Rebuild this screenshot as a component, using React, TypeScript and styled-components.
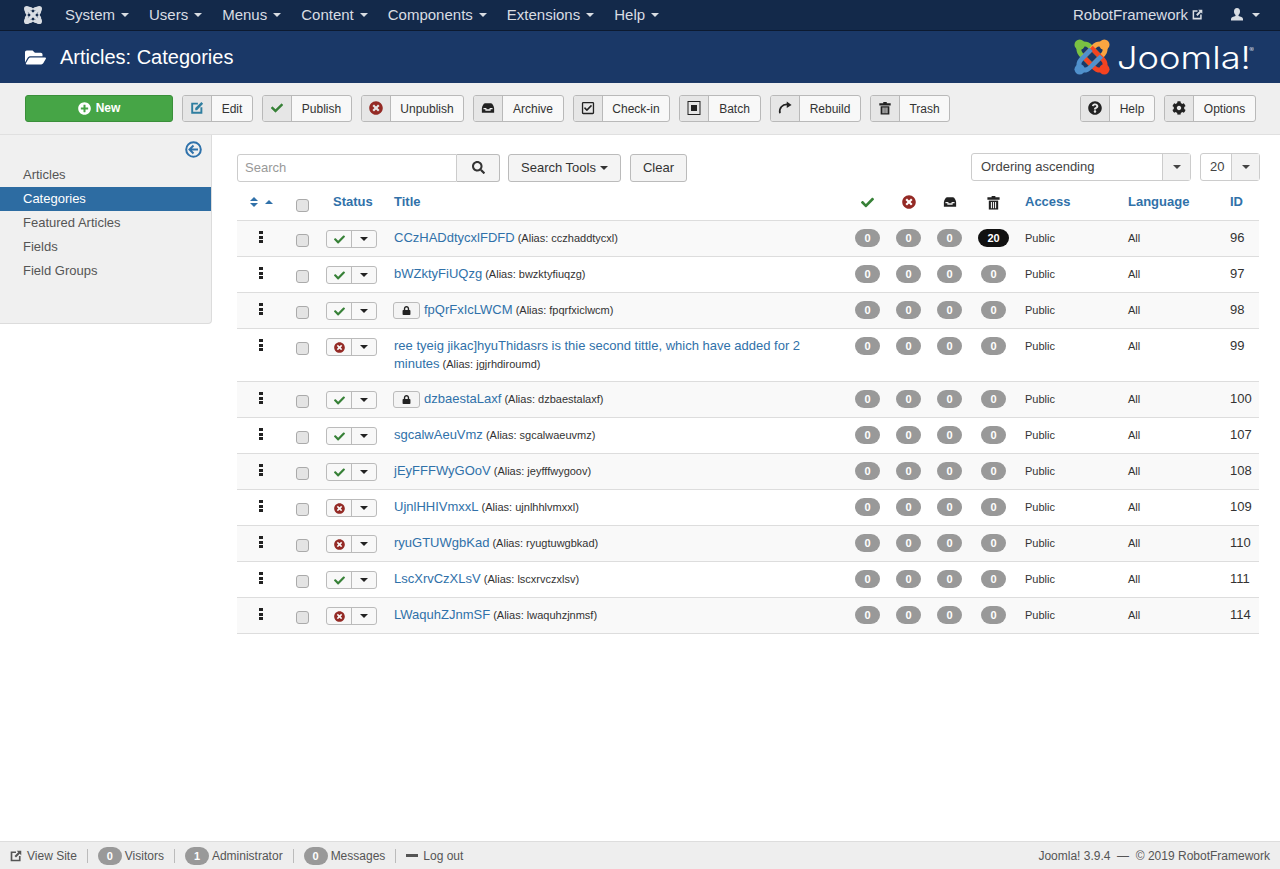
import React from "react";
import styled, { createGlobalStyle } from "styled-components";
import {
  FaCheck,
  FaCog,
  FaFolderOpen,
  FaLock,
  FaPlusCircle,
  FaQuestionCircle,
  FaRegCheckSquare,
  FaSearch,
  FaTimesCircle,
} from "react-icons/fa";

const GlobalStyle = createGlobalStyle`
  html, body { margin: 0; padding: 0; height: 100%; }
  body {
    font-family: "Liberation Sans", Arial, sans-serif;
    font-size: 13px;
    line-height: 18px;
    color: #333;
    background: #fff;
  }
  * { box-sizing: border-box; }
`;

const Page = styled.div`
  height: 869px;
  display: flex;
  flex-direction: column;
  overflow: hidden;
`;

const NavBar = styled.nav`
  height: 31px;
  flex: none;
  background: #13294a;
  border-bottom: 1px solid #0c1a30;
  display: flex;
  align-items: center;
  padding: 0 20px 1px 24px;
  color: #d9dde3;
  font-size: 15px;
`;

const NavLogo = styled.span`
  width: 18px;
  display: flex;
  margin-right: 23px;
`;

const NavItem = styled.span`
  display: flex;
  align-items: center;
  gap: 6px;
  margin-right: 20px;
`;

const Caret = styled.i<{ $color?: string; $up?: boolean }>`
  display: inline-block;
  width: 0;
  height: 0;
  border-left: 4px solid transparent;
  border-right: 4px solid transparent;
  border-top: ${(p) => (p.$up ? "0" : `4px solid ${p.$color ?? "#d9dde3"}`)};
  border-bottom: ${(p) => (p.$up ? `4px solid ${p.$color ?? "#d9dde3"}` : "0")};
`;

const NavRight = styled.div`
  margin-left: auto;
  display: flex;
  align-items: center;
`;

const NavUser = styled.span`
  display: flex;
  align-items: center;
  gap: 4px;
  margin-right: 28px;
`;

const UserMenu = styled.span`
  display: flex;
  align-items: center;
  gap: 9px;
`;

const Header = styled.header`
  height: 52px;
  flex: none;
  background: #1a3867;
  color: #fff;
  display: flex;
  align-items: center;
  padding: 0 27px 0 25px;
`;

const PageTitle = styled.h1`
  margin: 0;
  font-size: 20px;
  font-weight: 400;
  line-height: 24px;
  display: flex;
  align-items: center;
  gap: 14px;
`;

const Logo = styled.div`
  margin-left: auto;
  display: flex;
  align-items: center;
  gap: 7px;
`;

const LogoWord = styled.span`
  display: inline-block;
  width: 136px;
  font-family: Inter, "Liberation Sans", sans-serif;
  font-weight: 300;
  font-size: 31px;
  line-height: 36px;
  color: #fff;
  white-space: nowrap;
  position: relative;
  top: 1px;
  transform: scaleX(1.17);
  transform-origin: left center;
`;

const LogoMark = styled.sup`
  font-size: 6px;
  position: absolute;
  top: -8px;
  right: 19px;
`;

const Toolbar = styled.div`
  height: 52px;
  flex: none;
  background: #efefef;
  border-bottom: 1px solid #e0e0e0;
  display: flex;
  align-items: center;
  padding: 0 24px 1px 25px;
  gap: 9px;
`;

const NewButton = styled.button`
  width: 148px;
  height: 27px;
  border: 1px solid #3a8f3a;
  border-radius: 3px;
  background: #46a546;
  color: #fff;
  font: bold 12px "Liberation Sans", sans-serif;
  display: flex;
  align-items: center;
  justify-content: center;
  gap: 5px;
  padding: 0;
`;

const ToolButton = styled.button<{ $w: number }>`
  width: ${(p) => p.$w}px;
  height: 27px;
  border: 1px solid #b9b9b9;
  border-radius: 3px;
  background: #f8f8f8;
  color: #333;
  font: 12px "Liberation Sans", sans-serif;
  display: flex;
  align-items: stretch;
  padding: 0;
  overflow: hidden;
`;

const ToolIcon = styled.span<{ $color?: string }>`
  width: 29px;
  flex: none;
  background: #e6e6e6;
  border-right: 1px solid #b9b9b9;
  color: ${(p) => p.$color ?? "#222"};
  display: flex;
  align-items: center;
  justify-content: center;
`;

const ToolLabel = styled.span`
  flex: 1;
  display: flex;
  align-items: center;
  justify-content: center;
  padding-top: 1px;
`;

const ToolSpacer = styled.div`
  margin-left: auto;
  display: flex;
  gap: 9px;
`;

const Body = styled.div`
  flex: 1;
  min-height: 0;
  display: flex;
  align-items: flex-start;
`;

const Sidebar = styled.aside`
  width: 212px;
  height: 189px;
  flex: none;
  background: #f0f0f0;
  border-right: 1px solid #dcdcdc;
  border-bottom: 1px solid #dcdcdc;
  border-bottom-right-radius: 4px;
  padding-top: 6px;
`;

const SideToggle = styled.div`
  height: 22px;
  display: flex;
  justify-content: flex-end;
  padding-right: 9px;
  color: #2f72ab;
`;

const SideItem = styled.div<{ $active?: boolean }>`
  height: 24px;
  line-height: 24px;
  padding-left: 23px;
  font-size: 13px;
  color: ${(p) => (p.$active ? "#fff" : "#555")};
  background: ${(p) => (p.$active ? "#2d6ca2" : "transparent")};
`;

const Content = styled.main`
  flex: 1;
  padding: 19px 20px 0 25px;
  min-width: 0;
`;

const Filters = styled.div`
  display: flex;
  align-items: flex-start;
  height: 36px;
`;

const SearchInput = styled.div`
  width: 220px;
  height: 28px;
  border: 1px solid #ccc;
  border-radius: 3px 0 0 3px;
  padding: 0 7px;
  line-height: 26px;
  color: #999;
  font-size: 13px;
`;

const FilterButton = styled.button<{ $w: number; $group?: boolean; $gap?: number }>`
  width: ${(p) => p.$w}px;
  height: 28px;
  margin-left: ${(p) => (p.$group ? 0 : p.$gap ?? 8)}px;
  border: 1px solid #bbb;
  border-left-width: ${(p) => (p.$group ? "0" : "1px")};
  border-radius: ${(p) => (p.$group ? "0 3px 3px 0" : "3px")};
  background: #f4f4f4;
  color: #333;
  font: 13px "Liberation Sans", sans-serif;
  display: flex;
  align-items: center;
  justify-content: center;
  gap: 4px;
  padding: 0 0 1px;
`;

const SelectBox = styled.div<{ $w: number }>`
  width: ${(p) => p.$w}px;
  height: 28px;
  margin-top: -1px;
  border: 1px solid #ccc;
  border-radius: 3px;
  display: flex;
  align-items: stretch;
  font-size: 13px;
  color: #444;
`;

const SelectValue = styled.span`
  flex: 1;
  padding-left: 9px;
  line-height: 26px;
`;

const SelectCaret = styled.span`
  width: 28px;
  flex: none;
  background: #f2f2f2;
  border-left: 1px solid #ccc;
  display: flex;
  align-items: center;
  justify-content: center;
`;

const FilterEnd = styled.div`
  margin-left: auto;
  display: flex;
  gap: 9px;
`;

const COLUMNS = "48px 34px 67px 461px 41px 41px 41px 47px 103px 102px 38px";

const HeadRow = styled.div`
  display: grid;
  grid-template-columns: ${COLUMNS};
  width: 1022px;
  height: 30px;
  padding-bottom: 6px;
  align-items: center;
  color: #3071a9;
  font-weight: bold;
  font-size: 13px;
`;

const HeadCell = styled.div<{ $center?: boolean; $dark?: boolean }>`
  display: flex;
  align-items: center;
  justify-content: ${(p) => (p.$center ? "center" : "flex-start")};
  padding-left: ${(p) => (p.$center ? "0" : "8px")};
  color: ${(p) => (p.$dark ? "#222" : "inherit")};
`;

const StatusHead = styled(HeadCell)`
  padding-left: 14px;
`;

const SortIcons = styled.div`
  display: flex;
  align-items: center;
  gap: 7px;
`;

const SortPair = styled.span`
  display: flex;
  flex-direction: column;
  gap: 2px;
`;

const Row = styled.div<{ $odd: boolean }>`
  display: grid;
  grid-template-columns: ${COLUMNS};
  width: 1022px;
  min-height: 36px;
  border-top: 1px solid #ddd;
  background: ${(p) => (p.$odd ? "#f9f9f9" : "#fff")};
  padding-top: 8px;
  padding-bottom: 8px;
  font-size: 11px;
  color: #333;
`;

const TableEnd = styled.div`
  width: 1022px;
  border-top: 1px solid #ddd;
`;

const Cell = styled.div<{ $center?: boolean }>`
  display: flex;
  align-items: flex-start;
  justify-content: ${(p) => (p.$center ? "center" : "flex-start")};
  padding-left: ${(p) => (p.$center ? "0" : "8px")};
`;

const Handle = styled.span`
  display: flex;
  flex-direction: column;
  gap: 1.5px;
  margin-top: 2px;
`;

const HandleDot = styled.i`
  display: block;
  width: 4px;
  height: 3px;
  background: #222;
`;

const CheckBox = styled.span`
  width: 13px;
  height: 13px;
  margin-top: 5px;
  border: 1px solid #aaa;
  border-radius: 3px;
  background: #e4e4e4;
`;

const HeadCheck = styled(CheckBox)`
  margin-top: 6px;
`;

const StatusGroup = styled.span`
  width: 51px;
  height: 18px;
  margin-top: 1px;
  margin-left: -1px;
  border: 1px solid #bbb;
  border-radius: 3px;
  background: #f8f8f8;
  display: flex;
`;

const StatusIcon = styled.span<{ $color: string }>`
  width: 25px;
  flex: none;
  border-right: 1px solid #bbb;
  color: ${(p) => p.$color};
  display: flex;
  align-items: center;
  justify-content: center;
`;

const StatusCaret = styled.span`
  flex: 1;
  display: flex;
  align-items: center;
  justify-content: center;
`;

const TitleCell = styled.div`
  padding: 0 40px 0 8px;
  font-size: 11px;
`;

const TitleLink = styled.a`
  color: #3071a9;
  font-size: 13px;
`;

const LockBadge = styled.span`
  display: inline-flex;
  align-items: center;
  justify-content: center;
  width: 27px;
  height: 17px;
  margin: 1px 4px 0 -1px;
  vertical-align: top;
  border: 1px solid #bbb;
  border-radius: 3px;
  background: #f4f4f4;
  color: #222;
`;

const Count = styled.span<{ $hot?: boolean }>`
  min-width: 24px;
  height: 18px;
  padding: 0 9px;
  border-radius: 9px;
  background: ${(p) => (p.$hot ? "#111" : "#999")};
  color: #fff;
  font-size: 11px;
  font-weight: bold;
  line-height: 18px;
  text-align: center;
`;

const PlainCell = styled(Cell)`
  line-height: 18px;
`;

const IdCell = styled(Cell)`
  font-size: 13px;
`;

const Footer = styled.footer`
  height: 28px;
  flex: none;
  background: #eee;
  border-top: 1px solid #ddd;
  display: flex;
  align-items: center;
  padding: 0 10px;
  font-size: 12px;
  color: #555;
`;

const FootItem = styled.span<{ $last?: boolean }>`
  display: flex;
  align-items: center;
  gap: 3px;
  padding-right: 10px;
  margin-right: 10px;
  border-right: ${(p) => (p.$last ? "0" : "1px solid #bbb")};
  height: 14px;
`;

const FootSite = styled(FootItem)`
  gap: 5px;
`;

const FootBadge = styled.span`
  width: 24px;
  height: 18px;
  border-radius: 9px;
  background: #999;
  color: #fff;
  font-size: 11px;
  font-weight: bold;
  line-height: 18px;
  text-align: center;
`;

const Dash = styled.i`
  display: block;
  width: 12px;
  height: 3px;
  margin-right: 2px;
  background: #555;
`;

const FootRight = styled.span`
  margin-left: auto;
  white-space: pre;
`;

const JoomlaGlyph = ({ size }: { size: number }) => {
  const colors = ["#7ac143", "#f9a541", "#f44321", "#5091cd"];
  return (
    <svg width={size} height={size} viewBox="0 0 38 38">
      {colors.map((c, i) => (
        <g key={c} transform={`rotate(${i * 90} 19 19)`}>
          <circle cx="6" cy="6" r="5.5" fill={c} />
          <path d="M6 6 C3 14 8 17 11 20 L20 29" fill="none" stroke={c} strokeWidth="5" />
          <path d="M6 6 C14 3 17 8 20 11 L27 18" fill="none" stroke={c} strokeWidth="5" />
        </g>
      ))}
    </svg>
  );
};

const NavGlyph = () => (
  <svg width="18" height="18" viewBox="0 0 38 38">
    {[0, 90, 180, 270].map((r) => (
      <g key={r} transform={`rotate(${r} 19 19)`}>
        <circle cx="6" cy="6" r="6" fill="#d9dde3" />
        <path d="M6 6 L30 30" fill="none" stroke="#d9dde3" strokeWidth="6" />
        <path d="M6 6 C3 12 5 15 8 18" fill="none" stroke="#d9dde3" strokeWidth="6" />
        <path d="M6 6 C12 3 15 5 18 8" fill="none" stroke="#d9dde3" strokeWidth="6" />
      </g>
    ))}
  </svg>
);

const EditIcon = ({ color = "currentColor", size = 14 }: { color?: string; size?: number }) => (
  <svg width={size} height={size} viewBox="0 0 16 16" fill="none">
    <path d="M9 3H2.500v10.500H13V7" stroke={color} strokeWidth="2.200" />
    <path d="M6 10.500V8l7-7 2 2-7 7.500z" fill={color} />
  </svg>
);

const LinkIcon = ({ size = 11 }: { size?: number }) => (
  <svg width={size} height={size} viewBox="0 0 16 16" fill="none">
    <path d="M8 3H2v11h11V8" stroke="currentColor" strokeWidth="2.200" />
    <path d="M9 1h6v6l-2-2-5 5-2-2 5-5z" fill="currentColor" />
  </svg>
);

const UserIcon = () => (
  <svg width="12" height="13" viewBox="0 0 12 13">
    <path
      d="M6 0c2 0 3 1.400 3 3.400 0 1.500-.6 2.800-1.500 3.500v1.200c1.800.5 4.500 1.300 4.500 2.900v1.500H0v-1.500c0-1.600 2.700-2.400 4.500-2.900V6.900C3.600 6.200 3 4.900 3 3.400 3 1.400 4 0 6 0z"
      fill="currentColor"
    />
  </svg>
);

const ArchiveIcon = ({ size = 14 }: { size?: number }) => (
  <svg width={size} height={size} viewBox="0 0 16 16">
    <path d="M4.500 2.500h7c1.500 0 3.500 4 3.500 6v5H1v-5c0-2 2-6 3.500-6z" fill="currentColor" />
    <path d="M2.800 8h3.400v1.500h3.600V8h3.400v1.300H11V11H5V9.300H2.800z" fill="#f2f2f2" />
  </svg>
);

const BatchIcon = () => (
  <svg width="14" height="14" viewBox="0 0 14 14" fill="none">
    <rect x="1" y="0.500" width="12" height="13" stroke="currentColor" />
    <rect x="4" y="4" width="6" height="6" fill="currentColor" />
  </svg>
);

const RebuildIcon = () => (
  <svg width="14" height="14" viewBox="0 0 16 16" fill="none">
    <path d="M2.200 14C1 8 5 3.500 11 4" stroke="currentColor" strokeWidth="2" />
    <path d="M10 0.500 15.500 4.500 10 8z" fill="currentColor" />
  </svg>
);

const TrashIcon = ({ size = 14 }: { size?: number }) => (
  <svg width={size} height={size} viewBox="0 0 16 16">
    <path d="M1.500 2.500H6V1h4v1.500h4.500V5h-13z" fill="currentColor" />
    <path d="M3 6h10v9.500H3z" fill="currentColor" />
    <path d="M5.200 7.500h1.200v6.500H5.200zM7.400 7.500h1.200v6.500H7.400zM9.600 7.500h1.200v6.500H9.600z" fill="#eee" />
  </svg>
);

const BackIcon = () => (
  <svg width="17" height="17" viewBox="0 0 17 17" fill="none">
    <circle cx="8.500" cy="8.500" r="7.300" stroke="currentColor" strokeWidth="2" />
    <path d="M8.500 4.500 4.500 8.500l4 4M5 8.500h8" stroke="currentColor" strokeWidth="2" />
  </svg>
);

const tools = [
  { label: "Edit", w: 71, icon: <EditIcon color="#2f7ea0" /> },
  { label: "Publish", w: 90, icon: <FaCheck size={12} color="#378137" /> },
  { label: "Unpublish", w: 103, icon: <FaTimesCircle size={14} color="#942a25" /> },
  { label: "Archive", w: 91, icon: <ArchiveIcon /> },
  { label: "Check-in", w: 97, icon: <FaRegCheckSquare size={14} /> },
  { label: "Batch", w: 82, icon: <BatchIcon /> },
  { label: "Rebuild", w: 91, icon: <RebuildIcon /> },
  { label: "Trash", w: 80, icon: <TrashIcon /> },
];

const navItems = ["System", "Users", "Menus", "Content", "Components", "Extensions", "Help"];

type Category = {
  title: string[];
  alias: string;
  id: number;
  on: boolean;
  locked?: boolean;
  trash?: number;
};

const rows: Category[] = [
  { title: ["CCzHADdtycxlFDFD"], alias: "cczhaddtycxl", id: 96, on: true, trash: 20 },
  { title: ["bWZktyFiUQzg"], alias: "bwzktyfiuqzg", id: 97, on: true },
  { title: ["fpQrFxIcLWCM"], alias: "fpqrfxiclwcm", id: 98, on: true, locked: true },
  {
    title: ["ree tyeig jikac]hyuThidasrs is thie second tittle, which have added for 2", "minutes"],
    alias: "jgjrhdiroumd",
    id: 99,
    on: false,
  },
  { title: ["dzbaestaLaxf"], alias: "dzbaestalaxf", id: 100, on: true, locked: true },
  { title: ["sgcalwAeuVmz"], alias: "sgcalwaeuvmz", id: 107, on: true },
  { title: ["jEyFFFWyGOoV"], alias: "jeyfffwygoov", id: 108, on: true },
  { title: ["UjnlHHIVmxxL"], alias: "ujnlhhlvmxxl", id: 109, on: false },
  { title: ["ryuGTUWgbKad"], alias: "ryugtuwgbkad", id: 110, on: false },
  { title: ["LscXrvCzXLsV"], alias: "lscxrvczxlsv", id: 111, on: true },
  { title: ["LWaquhZJnmSF"], alias: "lwaquhzjnmsf", id: 114, on: false },
];

export default function App() {
  return (
    <Page>
      <GlobalStyle />
      <NavBar>
        <NavLogo>
          <NavGlyph />
        </NavLogo>
        {navItems.map((n) => (
          <NavItem key={n}>
            {n} <Caret />
          </NavItem>
        ))}
        <NavRight>
          <NavUser>
            RobotFramework <LinkIcon />
          </NavUser>
          <UserMenu>
            <UserIcon />
            <Caret />
          </UserMenu>
        </NavRight>
      </NavBar>

      <Header>
        <PageTitle>
          <FaFolderOpen size={21} />
          Articles: Categories
        </PageTitle>
        <Logo>
          <JoomlaGlyph size={36} />
          <LogoWord>
            Joomla!<LogoMark>®</LogoMark>
          </LogoWord>
        </Logo>
      </Header>

      <Toolbar>
        <NewButton>
          <FaPlusCircle size={13} /> New
        </NewButton>
        {tools.map((t) => (
          <ToolButton key={t.label} $w={t.w}>
            <ToolIcon>{t.icon}</ToolIcon>
            <ToolLabel>{t.label}</ToolLabel>
          </ToolButton>
        ))}
        <ToolSpacer>
          <ToolButton $w={75}>
            <ToolIcon>
              <FaQuestionCircle size={14} />
            </ToolIcon>
            <ToolLabel>Help</ToolLabel>
          </ToolButton>
          <ToolButton $w={92}>
            <ToolIcon>
              <FaCog size={14} />
            </ToolIcon>
            <ToolLabel>Options</ToolLabel>
          </ToolButton>
        </ToolSpacer>
      </Toolbar>

      <Body>
        <Sidebar>
          <SideToggle>
            <BackIcon />
          </SideToggle>
          <SideItem>Articles</SideItem>
          <SideItem $active>Categories</SideItem>
          <SideItem>Featured Articles</SideItem>
          <SideItem>Fields</SideItem>
          <SideItem>Field Groups</SideItem>
        </Sidebar>

        <Content>
          <Filters>
            <SearchInput>Search</SearchInput>
            <FilterButton $w={43} $group>
              <FaSearch size={13} />
            </FilterButton>
            <FilterButton $w={113}>
              Search Tools <Caret $color="#333" />
            </FilterButton>
            <FilterButton $w={57} $gap={9}>
              Clear
            </FilterButton>
            <FilterEnd>
              <SelectBox $w={220}>
                <SelectValue>Ordering ascending</SelectValue>
                <SelectCaret>
                  <Caret $color="#444" />
                </SelectCaret>
              </SelectBox>
              <SelectBox $w={60}>
                <SelectValue>20</SelectValue>
                <SelectCaret>
                  <Caret $color="#444" />
                </SelectCaret>
              </SelectBox>
            </FilterEnd>
          </Filters>

          <HeadRow>
            <HeadCell $center>
              <SortIcons>
                <SortPair>
                  <Caret $color="#3071a9" $up />
                  <Caret $color="#3071a9" />
                </SortPair>
                <Caret $color="#3071a9" $up />
              </SortIcons>
            </HeadCell>
            <HeadCell $center>
              <HeadCheck />
            </HeadCell>
            <StatusHead>Status</StatusHead>
            <HeadCell>Title</HeadCell>
            <HeadCell $center>
              <FaCheck size={13} color="#378137" />
            </HeadCell>
            <HeadCell $center>
              <FaTimesCircle size={14} color="#942a25" />
            </HeadCell>
            <HeadCell $center $dark>
              <ArchiveIcon />
            </HeadCell>
            <HeadCell $center $dark>
              <TrashIcon size={15} />
            </HeadCell>
            <HeadCell>Access</HeadCell>
            <HeadCell>Language</HeadCell>
            <HeadCell>ID</HeadCell>
          </HeadRow>

          {rows.map((r, i) => (
            <Row key={r.id} $odd={i % 2 === 0}>
              <Cell $center>
                <Handle>
                  <HandleDot />
                  <HandleDot />
                  <HandleDot />
                </Handle>
              </Cell>
              <Cell $center>
                <CheckBox />
              </Cell>
              <Cell>
                <StatusGroup>
                  <StatusIcon $color={r.on ? "#378137" : "#942a25"}>
                    {r.on ? <FaCheck size={11} /> : <FaTimesCircle size={11} />}
                  </StatusIcon>
                  <StatusCaret>
                    <Caret $color="#222" />
                  </StatusCaret>
                </StatusGroup>
              </Cell>
              <TitleCell>
                {r.locked && (
                  <LockBadge>
                    <FaLock size={9} />
                  </LockBadge>
                )}
                {r.title.map((line, n) => (
                  <React.Fragment key={line}>
                    {n > 0 && <br />}
                    <TitleLink>{line}</TitleLink>
                  </React.Fragment>
                ))}{" "}
                (Alias: {r.alias})
              </TitleCell>
              <Cell $center>
                <Count>0</Count>
              </Cell>
              <Cell $center>
                <Count>0</Count>
              </Cell>
              <Cell $center>
                <Count>0</Count>
              </Cell>
              <Cell $center>
                <Count $hot={!!r.trash}>{r.trash ?? 0}</Count>
              </Cell>
              <PlainCell>Public</PlainCell>
              <PlainCell>All</PlainCell>
              <IdCell>{r.id}</IdCell>
            </Row>
          ))}
          <TableEnd />
        </Content>
      </Body>

      <Footer>
        <FootSite>
          <LinkIcon size={12} /> View Site
        </FootSite>
        <FootItem>
          <FootBadge>0</FootBadge> Visitors
        </FootItem>
        <FootItem>
          <FootBadge>1</FootBadge> Administrator
        </FootItem>
        <FootItem>
          <FootBadge>0</FootBadge> Messages
        </FootItem>
        <FootItem $last>
          <Dash /> Log out
        </FootItem>
        <FootRight>Joomla! 3.9.4  —  © 2019 RobotFramework</FootRight>
      </Footer>
    </Page>
  );
}
